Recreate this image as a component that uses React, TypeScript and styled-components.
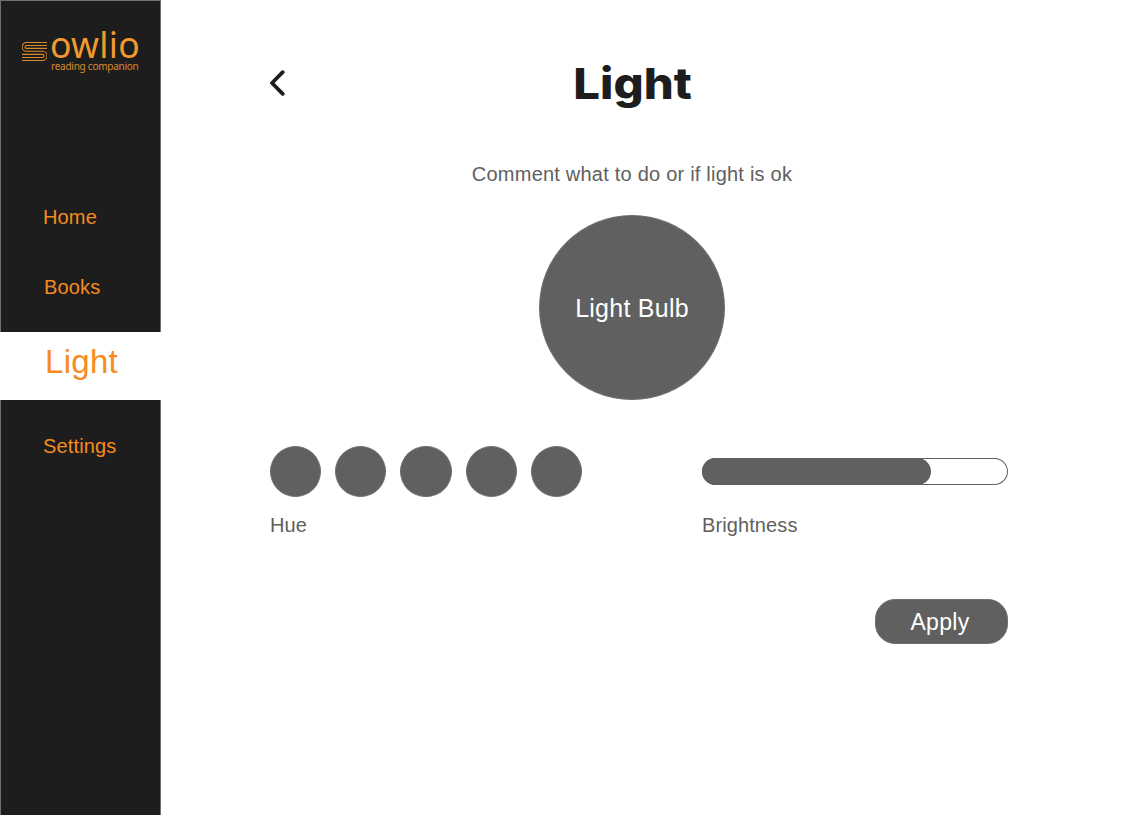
import React from "react";
import styled, { createGlobalStyle } from "styled-components";

const ink = "#1d1d1d";
const grey = "#606060";
const orange = "#f68b1f";

const GlobalStyle = createGlobalStyle`
  * { box-sizing: border-box; }
  body {
    margin: 0;
    background: #fff;
    color: ${grey};
    font-family: "Liberation Sans", Arial, sans-serif;
  }
  h1, p { margin: 0; }
  button { font: inherit; border: 0; padding: 0; cursor: pointer; }
`;

const Page = styled.div`
  display: flex;
  width: 1140px;
  height: 815px;
  overflow: hidden;
`;

const Sidebar = styled.aside`
  flex: none;
  width: 161px;
  background: ${ink};
  box-shadow: inset 1px 1px 0 #707070, inset -1px 0 0 #707070;
`;

const Logo = styled.div`
  display: flex;
  height: 182px;
  padding: 22px 0 0 22px;
  color: #f29a2e;
  font-family: "Noto Sans", sans-serif;
`;

const BookMark = styled.svg`
  flex: none;
  width: 25px;
  height: 21px;
  margin-top: 19px;
`;

const Wordmark = styled.div`
  margin-left: 3px;
  white-space: nowrap;
`;

const BrandName = styled.div`
  height: 38px;
  font-size: 35.5px;
  line-height: 45px;
  letter-spacing: 0.3px;
`;

const Tagline = styled.div`
  margin-left: 1px;
  color: #d98a2b;
  font-size: 10px;
  line-height: 13px;
  letter-spacing: -0.25px;
`;

const Nav = styled.nav`
  display: flex;
  flex-direction: column;
`;

const NavItem = styled.a<{ $active?: boolean; $indent: number; $height: number; $lift?: number }>`
  display: flex;
  align-items: center;
  height: ${(p) => p.$height}px;
  padding: 0 0 ${(p) => p.$lift ?? 0}px ${(p) => p.$indent}px;
  background: ${(p) => (p.$active ? "#fff" : "transparent")};
  color: ${orange};
  font-size: ${(p) => (p.$active ? 33 : 20)}px;
  letter-spacing: ${(p) => (p.$active ? 0.3 : 0.15)}px;
  white-space: nowrap;
`;

const Main = styled.main`
  width: 738px;
  margin-left: 109px;
  padding-top: 55px;
`;

const Header = styled.header`
  display: grid;
  grid-template-columns: 16px 1fr 29px;
  align-items: center;
  height: 56px;
`;

const BackButton = styled.button`
  display: flex;
  width: 16px;
  height: 28px;
  background: none;
`;

const Title = styled.h1`
  color: ${ink};
  font-family: Inter, sans-serif;
  font-size: 43px;
  font-weight: 800;
  line-height: 54px;
  text-align: center;
  transform: scaleX(1.1);
  padding-bottom: 1px;
`;

const Hint = styled.p`
  margin-top: 51px;
  padding-right: 14px;
  font-size: 20px;
  line-height: 24px;
  letter-spacing: 0.22px;
  text-align: center;
`;

const Bulb = styled.div`
  display: flex;
  align-items: center;
  justify-content: center;
  width: 186px;
  height: 185px;
  margin: 29px 0 0 269px;
  padding-top: 2px;
  border: 1px solid #707070;
  border-radius: 50%;
  background: ${grey};
  color: #fff;
  font-size: 25px;
  letter-spacing: 0.25px;
`;

const Controls = styled.div`
  display: flex;
  justify-content: space-between;
  margin-top: 46px;
`;

const Control = styled.section<{ $width: number }>`
  width: ${(p) => p.$width}px;
`;

const Setting = styled.div`
  display: flex;
  align-items: center;
  justify-content: space-between;
  height: 51px;
`;

const Swatch = styled.button`
  width: 51.2px;
  height: 51px;
  border: 1px solid #707070;
  border-radius: 50%;
  background: ${grey};
`;

const Track = styled.div`
  width: 100%;
  height: 27px;
  border-radius: 14px;
  box-shadow: inset 0 0 0 1px ${grey};
`;

const Level = styled.div`
  height: 100%;
  border-radius: 14px;
  background: ${grey};
`;

const Label = styled.p`
  margin-top: 16px;
  font-size: 20px;
  line-height: 24px;
  letter-spacing: 0.1px;
`;

const ApplyButton = styled.button`
  display: block;
  width: 133px;
  height: 45px;
  margin: 62px 0 0 auto;
  padding: 2px 3px 0 0;
  border: 1px solid #707070;
  border-radius: 20px;
  background: ${grey};
  color: #fff;
  font-size: 23px;
  letter-spacing: 0.3px;
`;

export default function App() {
  return (
    <>
      <GlobalStyle />
      <Page>
        <Sidebar>
          <Logo>
            <BookMark viewBox="0 0 25 21" fill="none" stroke="#d98a2b" strokeWidth="1.1">
              <path d="M25 1.5H4.5a4.3 4.3 0 0 0 0 8.8H20.5a4.6 4.6 0 0 1 0 9.2H0" />
              <path d="M25 4.5H4.5a1.4 1.4 0 0 0 0 2.9H25" />
              <path d="M0 13.4h20.5a1.5 1.5 0 0 1 0 3.1H0" />
            </BookMark>
            <Wordmark>
              <BrandName>owlio</BrandName>
              <Tagline>reading companion</Tagline>
            </Wordmark>
          </Logo>
          <Nav>
            <NavItem $indent={43} $height={70}>Home</NavItem>
            <NavItem $indent={44} $height={80} $lift={10}>Books</NavItem>
            <NavItem $indent={45} $height={68} $lift={8} $active>Light</NavItem>
            <NavItem $indent={43} $height={92}>Settings</NavItem>
          </Nav>
        </Sidebar>
        <Main>
          <Header>
            <BackButton aria-label="Back">
              <svg width="16" height="28" viewBox="0 0 16 28" fill="none" stroke={ink} strokeWidth="3.8" strokeLinecap="round" strokeLinejoin="round">
                <path d="M12.7 3.2 2 14l10.7 10.8" />
              </svg>
            </BackButton>
            <Title>Light</Title>
          </Header>
          <Hint>Comment what to do or if light is ok</Hint>
          <Bulb>Light Bulb</Bulb>
          <Controls>
            <Control $width={312}>
              <Setting>
                {[1, 2, 3, 4, 5].map((n) => (
                  <Swatch key={n} aria-label={`Hue ${n}`} />
                ))}
              </Setting>
              <Label>Hue</Label>
            </Control>
            <Control $width={306}>
              <Setting>
                <Track>
                  <Level style={{ width: "74.8%" }} />
                </Track>
              </Setting>
              <Label>Brightness</Label>
            </Control>
          </Controls>
          <ApplyButton>Apply</ApplyButton>
        </Main>
      </Page>
    </>
  );
}
